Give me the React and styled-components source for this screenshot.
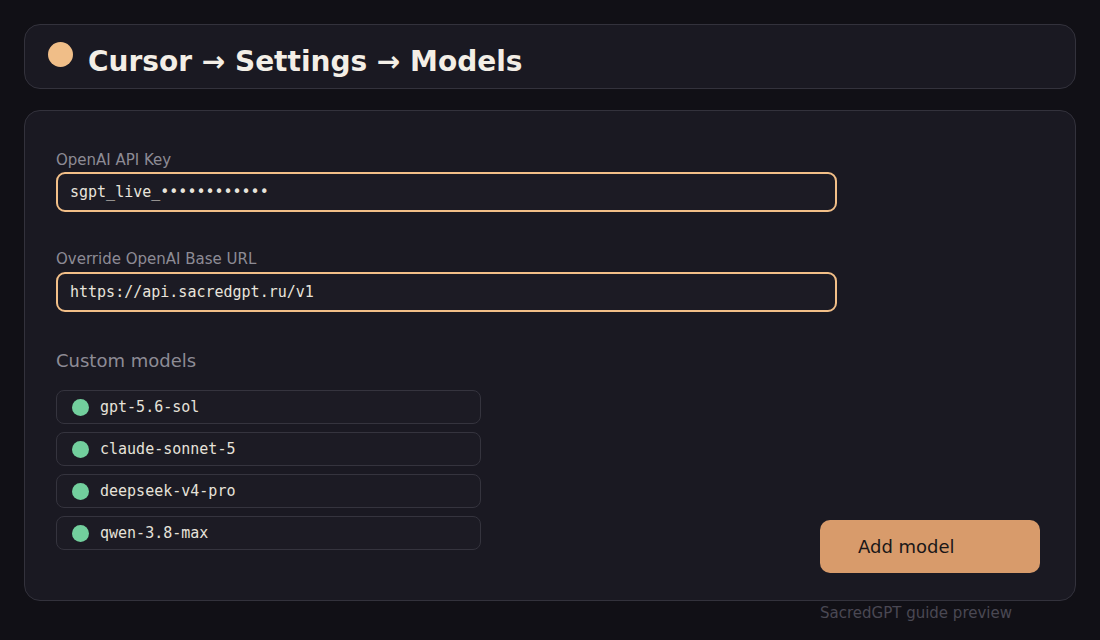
import React from "react";
import styled, { createGlobalStyle } from "styled-components";

const GlobalStyle = createGlobalStyle`
  html, body {
    margin: 0;
    padding: 0;
    background: #111016;
  }
  body {
    font-family: "DejaVu Sans", "Liberation Sans", sans-serif;
  }
`;

const Page = styled.div`
  width: 1100px;
  height: 640px;
  box-sizing: border-box;
  padding: 24px 24px 0;
  display: flex;
  flex-direction: column;
  gap: 21px;
`;

const Card = styled.div`
  background: #1a1922;
  border: 1px solid #33323c;
  border-radius: 16px;
  box-sizing: border-box;
`;

const Header = styled(Card)`
  height: 65px;
  display: flex;
  align-items: flex-start;
  padding: 17px 23px 0;
  gap: 15px;
`;

const Dot = styled.span`
  width: ${(p) => p.size}px;
  height: ${(p) => p.size}px;
  border-radius: 50%;
  background: ${(p) => p.color};
  flex: none;
`;

const Title = styled.h1`
  margin: 0;
  font-size: 28px;
  line-height: 36px;
  font-weight: 700;
  color: #f3eee6;
  position: relative;
  top: 2px;
`;

const Panel = styled(Card)`
  height: 491px;
  padding: 40px 31px 27px;
  display: flex;
  flex-direction: column;
`;

const Field = styled.div`
  display: flex;
  flex-direction: column;
  gap: ${(p) => (p.first ? 3 : 4)}px;
  margin-bottom: 38px;
`;

const Label = styled.label`
  font-size: 15px;
  color: #8d8b95;
  line-height: 18px;
`;

const Input = styled.div`
  width: 781px;
  height: 40px;
  box-sizing: border-box;
  border: 2px solid #f2bf88;
  border-radius: 9px;
  background: #1c1b24;
  display: flex;
  align-items: center;
  padding: 0 12px;
  font-family: "DejaVu Sans Mono", "Liberation Mono", monospace;
  font-size: 15px;
  color: #e8e4dc;
`;

const Section = styled.div`
  flex: 1;
  display: flex;
  justify-content: space-between;
  align-items: flex-end;
  margin-top: -1px;
`;

const ModelsCol = styled.div`
  align-self: flex-start;
  display: flex;
  flex-direction: column;
`;

const SectionTitle = styled.h2`
  margin: 0 0 17px;
  font-size: 18px;
  font-weight: 400;
  color: #8d8b95;
  line-height: 24px;
`;

const ModelList = styled.div`
  display: flex;
  flex-direction: column;
  gap: 8px;
`;

const ModelRow = styled.div`
  width: 425px;
  height: 34px;
  box-sizing: border-box;
  border: 1px solid #35343e;
  border-radius: 8px;
  background: #1c1b24;
  display: flex;
  align-items: center;
  padding: 0 15px;
  gap: 11px;
`;

const ModelName = styled.span`
  font-family: "DejaVu Sans Mono", "Liberation Mono", monospace;
  font-size: 15px;
  color: #e6e2da;
`;

const AddButton = styled.button`
  width: 220px;
  height: 53px;
  margin-right: 4px;
  border: none;
  border-radius: 10px;
  background: #d89b6b;
  color: #1a1718;
  font-family: "DejaVu Sans", "Liberation Sans", sans-serif;
  font-size: 18px;
  text-align: left;
  padding: 0 38px;
  cursor: pointer;
`;

const Footer = styled.div`
  margin-top: -18px;
  padding-left: 796px;
  font-size: 15px;
  line-height: 18px;
  color: #4a4853;
`;

const models = ["gpt-5.6-sol", "claude-sonnet-5", "deepseek-v4-pro", "qwen-3.8-max"];

export default function App() {
  return (
    <>
      <GlobalStyle />
      <Page>
        <Header>
          <Dot size={25} color="#f0be88" />
          <Title>Cursor → Settings → Models</Title>
        </Header>
        <Panel>
          <Field first>
            <Label>OpenAI API Key</Label>
            <Input>sgpt_live_••••••••••••</Input>
          </Field>
          <Field>
            <Label>Override OpenAI Base URL</Label>
            <Input>https://api.sacredgpt.ru/v1</Input>
          </Field>
          <Section>
            <ModelsCol>
              <SectionTitle>Custom models</SectionTitle>
              <ModelList>
                {models.map((m) => (
                  <ModelRow key={m}>
                    <Dot size={17} color="#72cf9d" />
                    <ModelName>{m}</ModelName>
                  </ModelRow>
                ))}
              </ModelList>
            </ModelsCol>
            <AddButton>Add model</AddButton>
          </Section>
        </Panel>
        <Footer>SacredGPT guide preview</Footer>
      </Page>
    </>
  );
}
